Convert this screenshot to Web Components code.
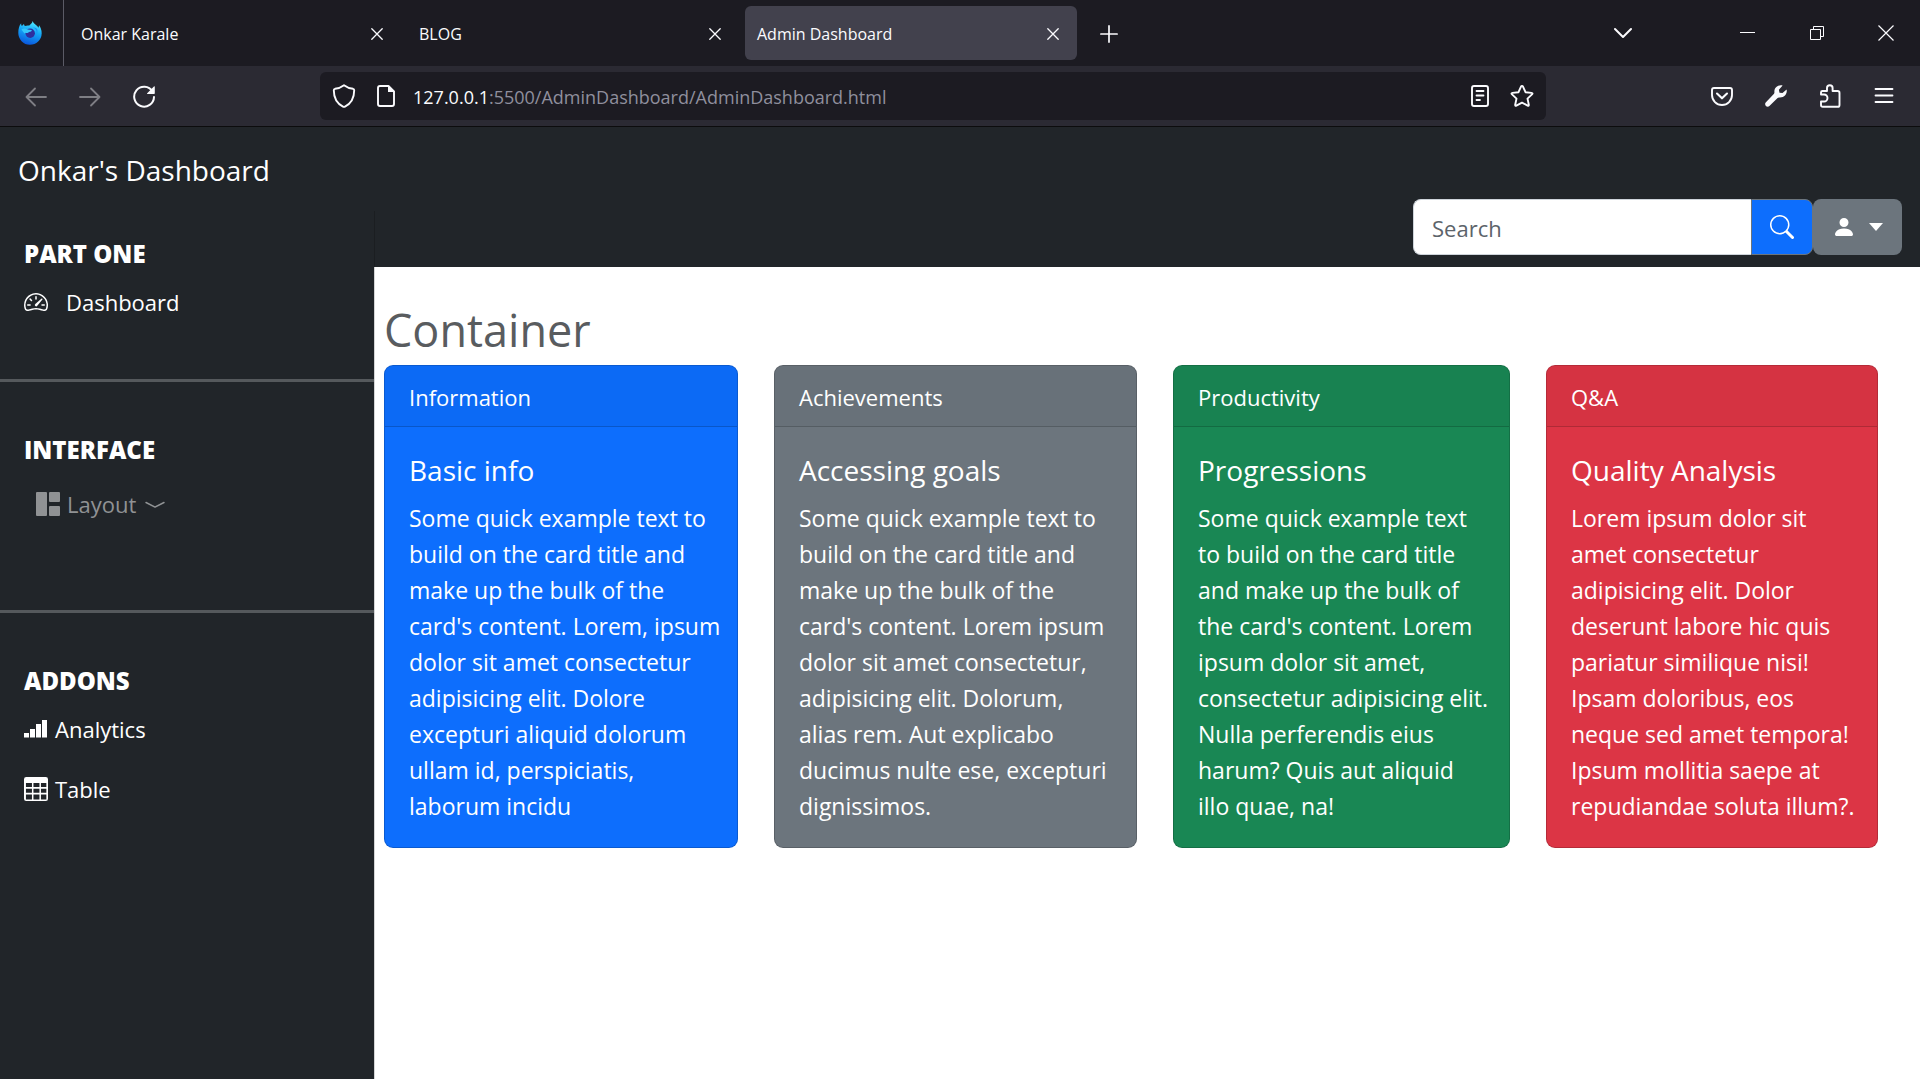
<!DOCTYPE html>
<html lang="en">
<head>
<meta charset="utf-8">
<title>Admin Dashboard</title>
<style>
html, body { margin: 0; height: 100%; }
body { font-family: "Open Sans", "Noto Sans", sans-serif; background: #fff; }
</style>
</head>
<body>
<browser-window></browser-window>
<script>
const stroke = 'fill="none" stroke="currentColor" stroke-linecap="round" stroke-linejoin="round"';
const ICONS = {
  firefox: ['0 0 24 24', '<defs><linearGradient id="g" x1="0.7" y1="0" x2="0.4" y2="1"><stop offset="0" stop-color="#55f0ff"/><stop offset=".45" stop-color="#14a7f7"/><stop offset="1" stop-color="#0a57dd"/></linearGradient></defs><path fill="url(#g)" d="M14.600 0c-.2 2.200-2.100 3.200-3.300 4.600-1.600-.3-3-.1-4.300.5-.7-.5-1-1.300-1-2.200-1 .5-1.600 1.300-2 2.200C3.300 4.400 3 3.300 3.200 2.200 1.200 4.300.3 8 .3 11.800a11.700 11.700 0 0 0 23.400.4c0-3-.9-6-2.700-8 0 .9-.2 1.800-.6 2.500C19.300 4 15.500 3.300 14.600 0z"/><circle cx="12.200" cy="12.200" r="4.700" fill="#2e2f9e"/><path fill="#35c6fb" d="M3.500 8.200c2.300-1.400 4.500-.8 6.100.4l4 .3c.7.700-.6 1.900-2.700 2.100-.7 1.500-2.500 1.100-3.600.8.300 2-2.100-.2-3.800-3.600z"/><path fill="#1b8df4" d="M15 6.600c2.800 1.100 4.300 3.800 3.600 6.500 2-3.500.7-6.800-3.600-6.500z"/>'],
  x: ['0 0 12 12', `<path ${stroke} stroke-width="1.3" d="M.8.8l10.400 10.400M11.200.8L.8 11.200"/>`],
  plus: ['0 0 18 18', `<path ${stroke} stroke-width="1.700" d="M9 .9v16.200M.9 9h16.200"/>`],
  chevron: ['0 0 18 12', `<path ${stroke} stroke-width="2" d="M1 2l8 8 8-8"/>`],
  minimize: ['0 0 16 16', '<path stroke="currentColor" d="M0 7.500h15"/>'],
  restore: ['0 0 16 16', '<path fill="none" stroke="currentColor" d="M1.500 4.500h10v10h-10zM4.500 4.500v-3h10v10h-3"/>'],
  close: ['0 0 16 16', '<path fill="none" stroke="currentColor" stroke-width="1.200" d="M.5.5l15 15M15.500.5l-15 15"/>'],
  back: ['0 0 24 24', `<path ${stroke} stroke-width="1.800" d="M22 13H2.500M11 4.500L2.500 13l8.500 8.500"/>`],
  forward: ['0 0 24 24', `<path ${stroke} stroke-width="1.800" d="M2 13h19.500M13 4.500l8.500 8.500-8.500 8.500"/>`],
  reload: ['0 0 24 24', '<path fill="none" stroke="currentColor" stroke-width="2" stroke-linecap="round" d="M20.500 7.500A9.900 9.900 0 1 0 22 13"/><path fill="currentColor" d="M22.800 2.800v6.500q0 .7-.7.700h-6.600q-1 0-.3-.8l6.700-6.800q.9-.6.900.4z"/>'],
  shield: ['0 0 24 24', `<path ${stroke} stroke-width="1.900" d="M12 1.200q4.500 3.300 9 3.600 1.200.3 1.200 1.500c0 7.500-3.600 13.500-9.200 16.300q-1 .5-2 0C5.400 19.800 1.800 13.800 1.800 6.300q0-1.200 1.200-1.500Q7.500 4.500 12 1.200z"/>`],
  page: ['0 0 24 24', `<path ${stroke} stroke-width="1.900" d="M14.500 2H6Q4 2 4 4v16q0 2 2 2h12q2 0 2-2V7.500z"/><path fill="currentColor" d="M14 1.500v6.500h6.800z"/>`],
  reader: ['0 0 24 24', `<rect x="4" y="2" width="16" height="20" rx="2" ${stroke} stroke-width="1.900"/><path ${stroke} stroke-width="1.800" d="M8.500 7h7M8.500 11.500h7M8.500 16h3.500"/>`],
  star: ['0 0 24 24', `<path ${stroke} stroke-width="1.900" d="M12 1.900q.7 0 1 .7l2.500 5.600 6 .7q1.700.3.500 1.500l-4.500 4.200 1.300 6.100q.2 1.500-1.200.900L12 18.600l-5.600 3q-1.400.6-1.200-.9l1.300-6.100L2 10.400Q.8 9.200 2.500 8.900l6-.7L11 2.600q.3-.7 1-.7z"/>`],
  pocket: ['0 0 24 24', `<path ${stroke} stroke-width="1.900" d="M4 4h16q2 0 2 2v5a10 10 0 0 1-20 0V6q0-2 2-2z"/><path ${stroke} stroke-width="2.100" d="M7 9.500l5 4.800 5-4.800"/>`],
  wrench: ['0 0 24 24', '<path fill="currentColor" d="M22.600 5.500l-4.100 3.600-3-.4-.6-3L18.600 1.500C15 .4 10 3 10.400 8.200q.1 1-.6 1.700L1.700 18.400c-1.900 2.100 1.300 5.800 3.700 3.500l8.200-8q.6-.6 1.700-.5C20.800 13.800 23.500 9.300 22.600 5.500z"/>'],
  puzzle: ['0 0 24 24', `<path ${stroke} stroke-width="1.900" d="M3 10.500V8.500q0-1.500 1.500-1.500H9V4a2.800 2.800 0 0 1 5.600 0v3h5q1.900 0 1.900 1.900v12q0 1.900-1.900 1.900H4.800Q3 22.800 3 21v-3.500h3a3.500 3.500 0 0 0 0-7z"/>`],
  menu: ['0 0 24 24', `<path ${stroke} stroke-width="1.800" d="M3.500 5h17M3.500 11.500h17M3.500 18h17"/>`],
  speedometer: ['0 0 16 16', '<g fill="currentColor"><path d="M8 4a.5.5 0 0 1 .5.5V6a.5.5 0 0 1-1 0V4.500A.5.5 0 0 1 8 4zM3.732 5.732a.5.5 0 0 1 .707 0l.915.914a.5.5 0 1 1-.708.708l-.914-.915a.5.5 0 0 1 0-.707zM2 10a.5.5 0 0 1 .5-.5h1.586a.5.5 0 0 1 0 1H2.500A.5.5 0 0 1 2 10zm9.500 0a.5.5 0 0 1 .5-.5h1.500a.5.5 0 0 1 0 1H12a.5.5 0 0 1-.5-.5zm.754-4.246a.389.389 0 0 0-.527-.02L7.547 9.310a.91.91 0 1 0 1.302 1.258l3.434-4.297a.389.389 0 0 0-.029-.518z"/><path fill-rule="evenodd" d="M0 10a8 8 0 1 1 15.547 2.661c-.442 1.253-1.845 1.602-2.932 1.250C11.309 13.488 9.475 13 8 13c-1.474 0-3.310.488-4.615.911-1.087.352-2.490.003-2.932-1.250A7.988 7.988 0 0 1 0 10zm8-7a7 7 0 0 0-6.603 9.329c.203.575.923.876 1.680.630C4.397 12.533 6.358 12 8 12s3.604.532 4.923.960c.757.245 1.477-.056 1.680-.631A7 7 0 0 0 8 3z"/></g>'],
  layout: ['0 0 24 24', '<g fill="currentColor"><rect width="11" height="24" rx="1"/><rect x="13" width="11" height="10" rx="1"/><rect x="13" y="14" width="11" height="10" rx="1"/></g>'],
  compact: ['0 0 16 16', '<path fill="currentColor" d="M1.553 6.776a.5.5 0 0 1 .670-.223L8 9.440l5.776-2.888a.5.5 0 1 1 .448.894l-6 3a.5.5 0 0 1-.448 0l-6-3a.5.5 0 0 1-.223-.670z"/>'],
  signal: ['0 0 24 24', '<g fill="currentColor"><rect y="16" width="5" height="4.500"/><rect x="6" y="12" width="5" height="8.500"/><rect x="12" y="7" width="5" height="13.500"/><rect x="18" y="3" width="5" height="17.500"/></g>'],
  table: ['0 0 16 16', '<path fill="currentColor" fill-rule="evenodd" d="M0 1.500A1.500 1.500 0 0 1 1.500 0h13A1.500 1.500 0 0 1 16 1.500v13a1.500 1.500 0 0 1-1.500 1.500h-13A1.500 1.500 0 0 1 0 14.500zM1.300 4v2.700h4V4zm5 0v2.700h4V4zm5 0v2.700h3.600V4zm-10 3.800v2.700h4V7.800zm5 0v2.700h4V7.800zm5 0v2.700h3.600V7.800zm-10 3.900V15h4v-3.300zm5 0V15h4v-3.300zm5 0V15h3.600v-3.300z"/>'],
  search: ['0 0 16 16', '<path fill="currentColor" d="M11.742 10.344a6.500 6.500 0 1 0-1.397 1.398h-.001c.03.04.062.078.098.115l3.850 3.850a1 1 0 0 0 1.415-1.414l-3.850-3.850a1.007 1.007 0 0 0-.115-.1zM12 6.500a5.500 5.500 0 1 1-11 0 5.500 5.500 0 0 1 11 0z"/>'],
  person: ['0 0 16 16', '<path fill="currentColor" d="M3 14s-1 0-1-1 1-4 6-4 6 3 6 4-1 1-1 1H3Zm5-6a3 3 0 1 0 0-6 3 3 0 0 0 0 6Z"/>'],
  caret: ['0 0 14 8', '<path fill="currentColor" d="M0 0h14L7 8z"/>']
};
const define = (name, html, setup) => customElements.define(name, class extends HTMLElement {
  connectedCallback() {
    if (this.shadowRoot) return;
    const root = this.attachShadow({ mode: 'open' });
    root.innerHTML = typeof html === 'function' ? html(this) : html;
  }
});
const BUTTON = 'button{font:inherit;color:inherit;background:none;border:0;padding:0;margin:0;display:flex;align-items:center;justify-content:center;cursor:pointer}';

define('ui-icon', el => {
  const [box, body] = ICONS[el.getAttribute('name')];
  return `<style>:host{display:inline-flex;flex:none;width:var(--w,24px);height:var(--h,var(--w,24px))}svg{width:100%;height:100%;display:block}</style><svg aria-hidden="true" viewBox="${box}">${body}</svg>`;
});

define('browser-tab', `<style>
  :host{display:flex;flex:0 1 332px;box-sizing:border-box;height:54px;align-items:center;justify-content:space-between;padding:2px 18px 0 12px;border-radius:6px;font-size:16px;color:#fbfbfe}
  :host([active]){background:#42414d}
  ${BUTTON}
</style><span><slot></slot></span><button aria-label="Close tab"><ui-icon name="x" style="--w:12px"></ui-icon></button>`);

define('tab-strip', `<style>
  :host{display:flex;align-items:center;height:66px;background:#1c1b22;color:#fbfbfe}
  .logo{display:flex;width:64px;height:66px;box-sizing:border-box;padding-right:3px;align-items:center;justify-content:center;border-right:1px solid #5b5b66}
  .tabs{display:flex;flex:1;gap:6px;padding-left:5px;align-items:center}
  .tools{display:flex;align-items:center}
  ${BUTTON}
  .new{width:52px;height:54px;padding-top:2px}
  .tools button{width:69px;height:66px}
  .tools .list{margin-right:56px}
</style>
<div class="logo"><ui-icon name="firefox"></ui-icon></div>
<div class="tabs"><browser-tab>Onkar Karale</browser-tab><browser-tab>BLOG</browser-tab><browser-tab active>Admin Dashboard</browser-tab>
<button class="new" aria-label="New tab"><ui-icon name="plus" style="--w:18px"></ui-icon></button></div>
<div class="tools">
<button class="list" aria-label="List all tabs"><ui-icon name="chevron" style="--w:18px;--h:12px"></ui-icon></button>
<button aria-label="Minimize"><ui-icon name="minimize" style="--w:16px"></ui-icon></button>
<button aria-label="Restore"><ui-icon name="restore" style="--w:16px"></ui-icon></button>
<button aria-label="Close"><ui-icon name="close" style="--w:16px"></ui-icon></button></div>`);

define('address-bar', `<style>
  :host{display:flex;align-items:center;height:48px;box-sizing:border-box;background:#1c1b22;color:#fbfbfe;border-radius:6px;padding:0 12px;gap:15px;font-size:18px}
  .group{display:flex;gap:18px}
  .url{flex:1;padding-top:2px;white-space:nowrap;color:#8f8f9d}
  b{font-weight:400;color:#fbfbfe}
  ${BUTTON}
</style>
<div class="group"><button aria-label="Tracking protection"><ui-icon name="shield"></ui-icon></button>
<button aria-label="Site information"><ui-icon name="page"></ui-icon></button></div>
<div class="url" role="textbox" aria-label="Address"><b>127.0.0.1</b>:5500/AdminDashboard/AdminDashboard.html</div>
<div class="group"><button aria-label="Reader view"><ui-icon name="reader"></ui-icon></button>
<button aria-label="Bookmark"><ui-icon name="star"></ui-icon></button></div>`);

define('nav-toolbar', `<style>
  :host{display:flex;align-items:center;height:60px;background:#2b2a33;color:#fbfbfe;border-bottom:1px solid #0c0c0d}
  .nav,.ext{display:flex;flex:none;gap:30px;box-sizing:border-box}
  .nav{width:320px;padding-left:24px}
  .ext{width:374px;padding-right:24px;justify-content:flex-end}
  address-bar{flex:1}
  ${BUTTON}
  button:disabled{opacity:.4}
</style>
<div class="nav"><button disabled aria-label="Back"><ui-icon name="back"></ui-icon></button>
<button disabled aria-label="Forward"><ui-icon name="forward"></ui-icon></button>
<button aria-label="Reload"><ui-icon name="reload"></ui-icon></button></div>
<address-bar></address-bar>
<div class="ext"><button aria-label="Pocket"><ui-icon name="pocket"></ui-icon></button>
<button aria-label="Developer tools"><ui-icon name="wrench"></ui-icon></button>
<button aria-label="Extensions"><ui-icon name="puzzle"></ui-icon></button>
<button aria-label="Menu"><ui-icon name="menu"></ui-icon></button></div>`);

define('search-form', `<style>
  :host{display:flex;font-size:22px}
  form{display:flex}
  ${BUTTON}
  input{font:inherit;box-sizing:border-box;width:338px;height:56px;padding:2px 18px 0;border:1px solid #ced4da;border-right:0;border-radius:8px 0 0 8px;color:#212529;background:#fff}
  input::placeholder{color:#5c636a;opacity:1}
  button{height:56px;box-sizing:border-box;color:#fff}
  .go{width:62px;background:#0d6efd;border:1px solid #6c757d;border-radius:0 8px 8px 0}
  .user{width:89px;background:#6c757d;border-radius:8px;gap:13px}
</style>
<form onsubmit="return false"><input type="text" placeholder="Search" aria-label="Search"><button class="go" aria-label="Search"><ui-icon name="search"></ui-icon></button></form>
<button class="user" aria-label="Account menu"><ui-icon name="person"></ui-icon><ui-icon name="caret" style="--w:14px;--h:8px"></ui-icon></button>`);

define('top-bar', `<style>
  :host{display:flex;justify-content:flex-end;align-items:flex-end;box-sizing:border-box;height:56px;padding:0 18px 12px;background:#212529;border-left:1px solid #1b1e21}
</style><search-form></search-form>`);

define('nav-section', el => `<style>
  :host{display:block;padding:0 24px}
  h2{margin:0;font-size:24px;line-height:36px;font-weight:800;text-transform:uppercase;color:#fff}
</style><h2>${el.getAttribute('heading')}</h2><slot></slot>`);

define('nav-link', el => `<style>
  :host{display:block;font-size:22px;line-height:36px;color:#fff}
  a{display:flex;align-items:center;gap:var(--gap,7px);color:inherit;text-decoration:none}
</style><a href="#"><ui-icon name="${el.getAttribute('icon')}"></ui-icon><span><slot></slot></span><slot name="end"></slot></a>`);

define('side-bar', `<style>
  :host{display:block;box-sizing:border-box;background:#212529;padding-top:25px}
  hr{margin:0;border:0;height:3px;background:#55595c}
  .one{padding-bottom:59px}
  .two{padding-top:50px;padding-bottom:88px}
  nav-link{margin-top:12px}
  .two nav-link{margin-top:18px;padding-left:12px;color:#909294}
  .three{padding-top:50px}
  .last{margin-top:24px}
</style>
<nav-section class="one" heading="Part one"><nav-link icon="speedometer" style="--gap:18px">Dashboard</nav-link></nav-section>
<hr>
<nav-section class="two" heading="Interface"><nav-link icon="layout">Layout<ui-icon slot="end" name="compact"></ui-icon></nav-link></nav-section>
<hr>
<nav-section class="three" heading="Addons"><nav-link icon="signal">Analytics</nav-link><nav-link class="last" icon="table">Table</nav-link></nav-section>`);

define('info-card', `<style>
  :host{display:block;box-sizing:border-box;color:#fff;background:var(--bg);border:1px solid rgba(0,0,0,.175);border-radius:9px;font-size:23px;line-height:36px;overflow:hidden}
  header{padding:13px 24px 11px;font-size:22px;background:rgba(0,0,0,.03);border-bottom:1px solid rgba(0,0,0,.175)}
  .body{padding:25px 0 23px 24px}
  h3{margin:0 0 12px;font-size:28px;line-height:36px;font-weight:400}
  p{margin:0}
</style><header><slot name="header"></slot></header><div class="body"><h3><slot name="title"></slot></h3><p><slot></slot></p></div>`);

define('card-deck', `<style>
  :host{display:grid;grid-template-columns:354fr 363fr 337fr 332fr;gap:36px}
</style><slot></slot>`);

define('dashboard-app', `<style>
  :host{display:flex;flex-direction:column;flex:1;background:#212529}
  .brand{height:84px;box-sizing:border-box;padding:2px 18px 0;display:flex;align-items:center}
  .brand a{color:#fff;text-decoration:none;font-size:28px}
  .row{display:flex;flex:1}
  side-bar{flex:0 0 374px}
  .content{display:flex;flex-direction:column;flex:1;min-width:0;background:#fff}
  main{flex:1;padding:35px 42px 24px 9px;border-left:1px solid #d4d5d6}
  h1{margin:0 0 7px;font-size:45px;line-height:56px;font-weight:400;color:#595c5f}
</style>
<div class="brand"><a href="#">Onkar's Dashboard</a></div>
<div class="row"><side-bar></side-bar><div class="content"><top-bar></top-bar><main><h1>Container</h1>
<card-deck>
<info-card style="--bg:#0d6efd"><span slot="header">Information</span><span slot="title">Basic info</span>Some quick example text to<br>build on the card title and<br>make up the bulk of the<br>card's content. Lorem, ipsum<br>dolor sit amet consectetur<br>adipisicing elit. Dolore<br>excepturi aliquid dolorum<br>ullam id, perspiciatis,<br>laborum incidu</info-card>
<info-card style="--bg:#6c757d"><span slot="header">Achievements</span><span slot="title">Accessing goals</span>Some quick example text to<br>build on the card title and<br>make up the bulk of the<br>card's content. Lorem ipsum<br>dolor sit amet consectetur,<br>adipisicing elit. Dolorum,<br>alias rem. Aut explicabo<br>ducimus nulte ese, excepturi<br>dignissimos.</info-card>
<info-card style="--bg:#198754"><span slot="header">Productivity</span><span slot="title">Progressions</span>Some quick example text<br>to build on the card title<br>and make up the bulk of<br>the card's content. Lorem<br>ipsum dolor sit amet,<br>consectetur adipisicing elit.<br>Nulla perferendis eius<br>harum? Quis aut aliquid<br>illo quae, na!</info-card>
<info-card style="--bg:#dc3545"><span slot="header">Q&amp;A</span><span slot="title">Quality Analysis</span>Lorem ipsum dolor sit<br>amet consectetur<br>adipisicing elit. Dolor<br>deserunt labore hic quis<br>pariatur similique nisi!<br>Ipsam doloribus, eos<br>neque sed amet tempora!<br>Ipsum mollitia saepe at<br>repudiandae soluta illum?.</info-card>
</card-deck></main></div></div>`);

define('browser-window', `<style>
  :host{display:flex;flex-direction:column;min-height:100vh}
</style><tab-strip></tab-strip><nav-toolbar></nav-toolbar><dashboard-app></dashboard-app>`);
</script>
</body>
</html>
